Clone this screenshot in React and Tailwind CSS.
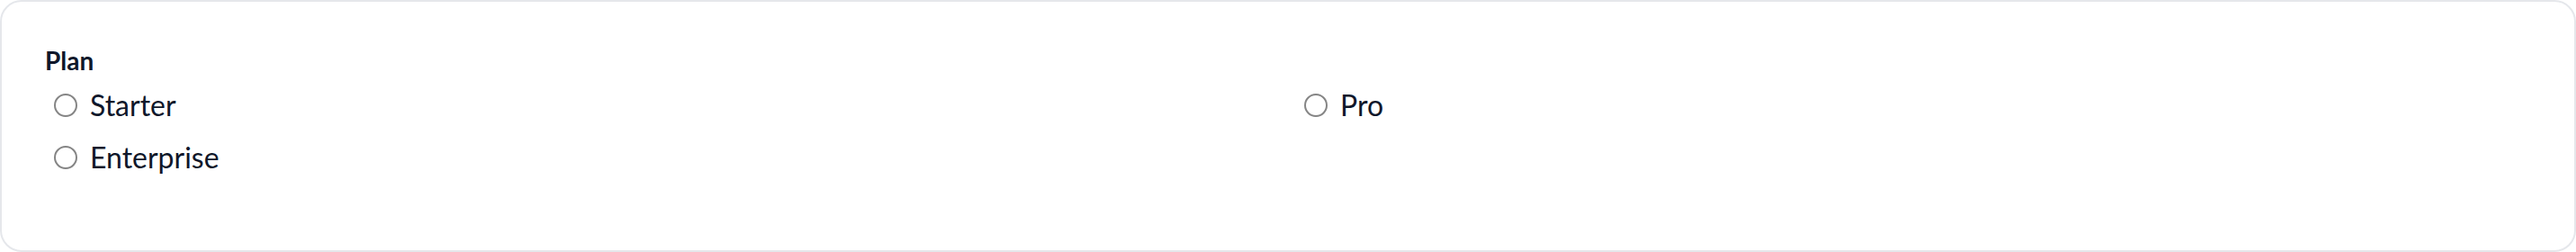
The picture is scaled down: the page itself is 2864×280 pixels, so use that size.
import React, { useState } from 'react';

const plans = ['Starter', 'Pro', 'Enterprise'];

const Radio = ({ label, checked, onSelect }) => (
    <label className="flex items-center gap-[14px] h-[48px] pl-[10px] cursor-pointer" onClick={onSelect}>
        <span className="w-[26px] h-[26px] rounded-full border-2 border-[#858585] bg-white flex items-center justify-center">
            {checked && <span className="w-[14px] h-[14px] rounded-full bg-[#0f172a]" />}
        </span>
        <span className="text-[32px] leading-[48px] text-[#0f172a]">{label}</span>
    </label>
);

const App = () => {
    const [plan, setPlan] = useState(null);

    return (
        <div className="w-[2864px] h-[280px] rounded-[24px] border-2 border-[#e5e7eb] bg-white px-[48px] pt-[45px] font-['Lato',sans-serif]">
            <div className="text-[28px] font-bold leading-[40px] text-[#0f172a]">Plan</div>
            <div className="grid grid-cols-2 gap-x-4 gap-y-[10px] mt-[6px]">
                {plans.map(p => (
                    <Radio key={p} label={p} checked={plan === p} onSelect={() => setPlan(p)} />
                ))}
            </div>
        </div>
    );
};

export default App;
